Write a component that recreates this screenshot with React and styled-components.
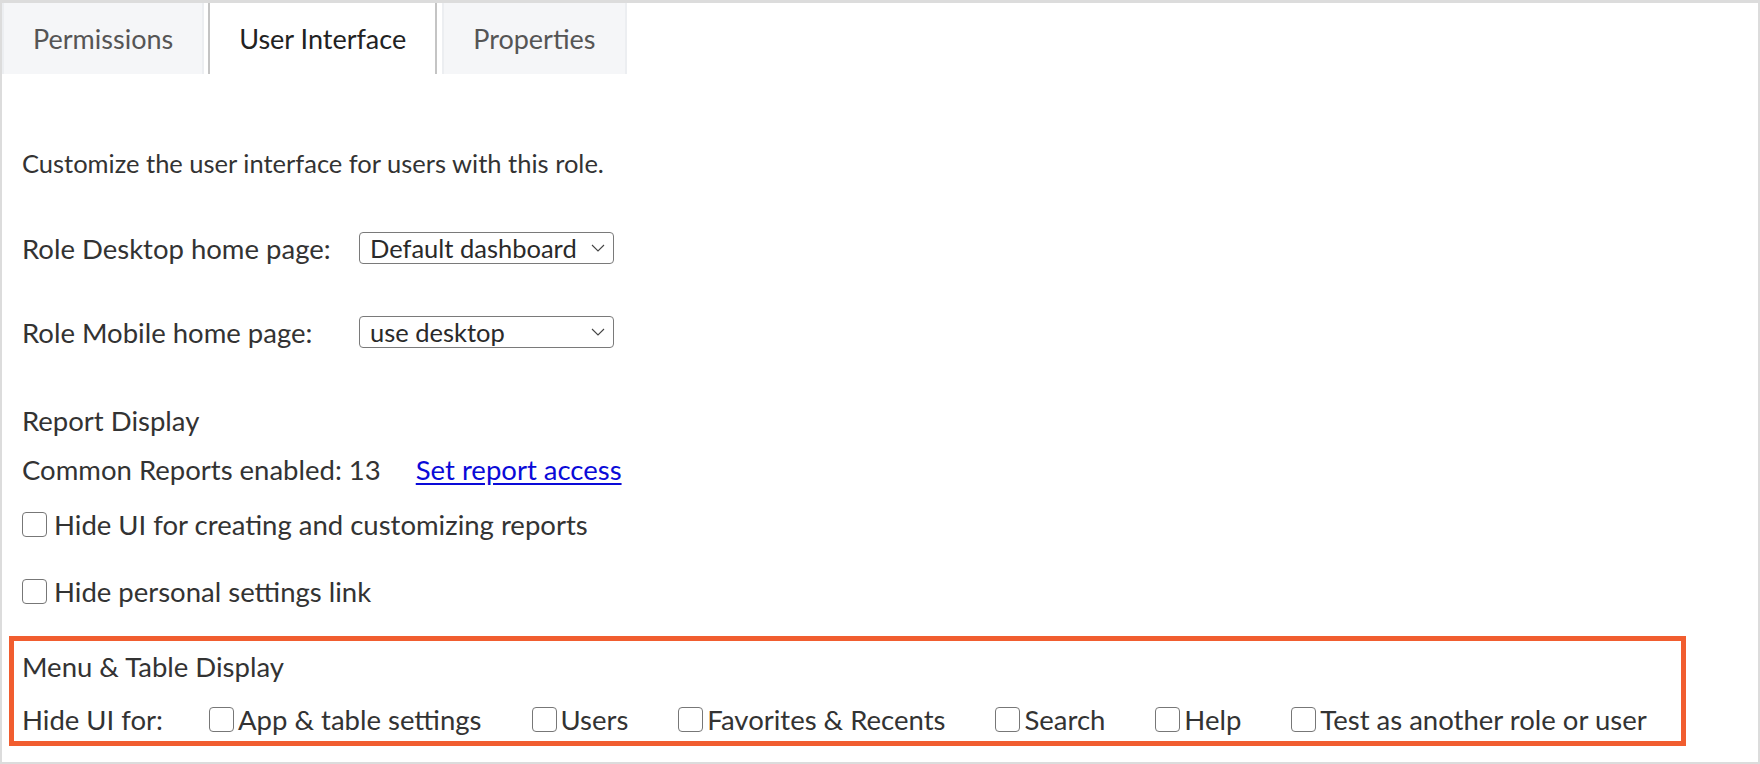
import React from 'react'
import styled, { createGlobalStyle } from 'styled-components'

const GlobalStyle = createGlobalStyle`
  html, body {
    margin: 0;
    padding: 0;
    background: #fff;
  }
  body {
    font-family: Lato, "Open Sans", sans-serif;
    color: #333;
  }
`

const Frame = styled.div`
  width: 1760px;
  height: 764px;
  box-sizing: border-box;
  border: 2px solid #dcdcdc;
  border-top-width: 3px;
  background: #fff;
  overflow: hidden;
`

const TabBar = styled.div`
  display: flex;
  align-items: stretch;
  height: 71px;
`

const Tab = styled.div`
  display: flex;
  align-items: center;
  box-sizing: border-box;
  padding: 0 29px;
  margin-right: ${p => p.$gap || 4}px;
  font-size: 27px;
  background: ${p => (p.$active ? '#fff' : '#f5f6f8')};
  color: ${p => (p.$active ? '#222' : '#555')};
  border: 2px solid ${p => (p.$active ? '#c4c4c4' : '#eceef1')};
  border-top: none;
  border-bottom: none;
`

const Content = styled.div`
  display: flex;
  flex-direction: column;
`

const Row = styled.div`
  display: flex;
  align-items: center;
  height: 32px;
  margin-top: ${p => p.$top || 0}px;
  padding-left: ${p => (p.$inset === undefined ? 20 : p.$inset)}px;
  gap: ${p => p.$gap || 0}px;
  font-size: ${p => p.$size || 27.5}px;
  white-space: nowrap;
`

const FieldLabel = styled.span`
  width: ${p => p.$width || 337}px;
`

const SelectBox = styled.div`
  display: flex;
  align-items: center;
  justify-content: space-between;
  box-sizing: border-box;
  width: 255px;
  height: 32px;
  padding: 0 8px 0 10px;
  border: 1.5px solid #7a7a7a;
  border-radius: 4px;
  font-size: 25.5px;
  color: #2a2a2a;
`

const Chevron = () => (
  <svg width="14" height="8" viewBox="0 0 14 8" fill="none">
    <path d="M1 1l6 6 6-6" stroke="#444" strokeWidth="1.1" />
  </svg>
)

const ReportLink = styled.a`
  margin-left: 35px;
  color: #0a0ad8;
  text-decoration: underline;
  text-underline-offset: 3px;
  cursor: pointer;
`

const Option = styled.label`
  display: flex;
  align-items: center;
  gap: ${p => p.$gap || 4}px;
`

const Box = styled.input.attrs({ type: 'checkbox' })`
  appearance: none;
  margin: 0;
  width: 25px;
  height: 25px;
  box-sizing: border-box;
  border: 1.5px solid #777;
  border-radius: 4px;
  background: #fff;
`

const Highlight = styled.div`
  box-sizing: border-box;
  width: 1677px;
  height: 110px;
  margin: 29px 0 0 7px;
  border: 5px solid #f15d2f;
  padding-top: 9px;
  display: flex;
  flex-direction: column;
`

const options = [
  'App & table settings',
  'Users',
  'Favorites & Recents',
  'Search',
  'Help',
  'Test as another role or user',
]

export default function App() {
  return (
    <>
      <GlobalStyle />
      <Frame>
        <TabBar>
          <Tab $gap={4}>Permissions</Tab>
          <Tab $active $gap={5}>User Interface</Tab>
          <Tab>Properties</Tab>
        </TabBar>
        <Content>
          <Row $top={73} $size={25.5}>Customize the user interface for users with this role.</Row>
          <Row $top={53}>
            <FieldLabel>Role Desktop home page:</FieldLabel>
            <SelectBox>
              Default dashboard
              <Chevron />
            </SelectBox>
          </Row>
          <Row $top={52}>
            <FieldLabel>Role Mobile home page:</FieldLabel>
            <SelectBox>
              use desktop
              <Chevron />
            </SelectBox>
          </Row>
          <Row $top={56}>Report Display</Row>
          <Row $top={17}>
            Common Reports enabled: 13
            <ReportLink>Set report access</ReportLink>
          </Row>
          <Row $top={23}>
            <Option $gap={7}>
              <Box />
              Hide UI for creating and customizing reports
            </Option>
          </Row>
          <Row $top={35}>
            <Option $gap={7}>
              <Box />
              Hide personal settings link
            </Option>
          </Row>
          <Highlight>
            <Row $inset={8}>Menu &amp; Table Display</Row>
            <Row $inset={8} $top={21} $gap={50}>
              <FieldLabel $width={137}>Hide UI for:</FieldLabel>
              {options.map(o => (
                <Option key={o}>
                  <Box />
                  {o}
                </Option>
              ))}
            </Row>
          </Highlight>
        </Content>
      </Frame>
    </>
  )
}
